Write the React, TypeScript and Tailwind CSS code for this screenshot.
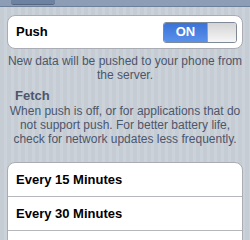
export default function App() {
	return (
		<div
			className="w-[250px] h-[240px] overflow-hidden bg-[repeating-linear-gradient(90deg,#c5ccd4_0px,#c5ccd4_4px,#cbd2d9_4px,#cbd2d9_7px)]"
			style={{ fontFamily: '"Liberation Sans", Arial, sans-serif' }}>
			{/* bottom of the nav bar */}
			<div className="h-[7px] bg-[#8d9db6] border-b border-[#6d809b] flex items-start">
				<div className="ml-[11px] w-[44px] h-[5px] bg-[#6e83a2] rounded-b-[3px] border-b border-[#55687f]" />
			</div>

			<div className="px-[7px] pt-[8px]">
				<div className="h-[34px] bg-white rounded-[8px] border border-[#a9adb3] flex items-center justify-between pl-[8px] pr-[5px]">
					<span className="text-[13px] font-bold text-black">Push</span>
					<div className="w-[74px] h-[21px] rounded-[3px] border border-[#7f8a99] overflow-hidden flex">
						<div className="w-[43px] bg-[linear-gradient(#3a72d6,#5a91ec)] flex items-center justify-center text-white text-[13px] font-bold">
							ON
						</div>
						<div className="flex-1 bg-[linear-gradient(#d4d4d4,#f6f6f6)] border-l border-[#9aa1ab]" />
					</div>
				</div>
			</div>

			<p className="mt-[5px] px-[6px] text-center text-[12px] leading-[14px] text-[#4c566c]">
				New data will be pushed to your phone from the server.
			</p>

			<div className="mt-[6px] px-[15px] text-[13px] leading-[16px] font-bold text-[#4c566c]">
				Fetch
			</div>
			<p className="px-[7px] text-center text-[12px] leading-[14px] text-[#4c566c]">
				When push is off, or for applications that do not support push. For better battery life,
				check for network updates less frequently.
			</p>

			<div className="mt-[16px] mx-[7px] bg-white rounded-t-[8px] border border-[#a9adb3]">
				<div className="h-[34px] flex items-center pl-[8px] border-b border-[#b4b7bc] text-[13px] font-bold text-black">
					Every 15 Minutes
				</div>
				<div className="h-[34px] flex items-center pl-[8px] border-b border-[#b4b7bc] text-[13px] font-bold text-black">
					Every 30 Minutes
				</div>
				<div className="h-[34px]" />
			</div>
		</div>
	);
}
